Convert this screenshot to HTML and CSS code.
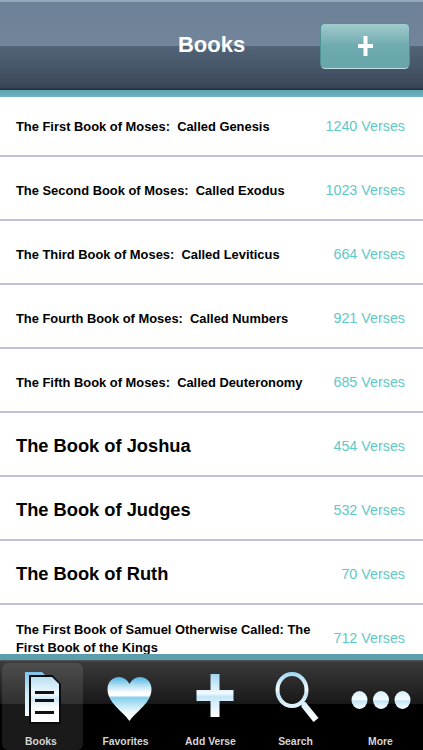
FILE: index.html
```
<!DOCTYPE html>
<html lang="en">
<head>
<meta charset="utf-8">
<title>Books</title>
<link rel="stylesheet" href="styles.css">
</head>
<body>
<div class="app">
  <header class="nav">
    <div class="nav-bar">
      <h1 class="nav-title">Books</h1>
      <button class="add-btn" type="button" aria-label="Add">
        <svg class="add-icon" viewBox="0 0 15 20"><path d="M5.500 0h4v8h5.500v4H9.500v8h-4v-8H0V8h5.500z"/></svg>
      </button>
    </div>
    <div class="nav-strip"></div>
  </header>
  <main class="list">
    <div class="row first"><span class="name">The First Book of Moses:  Called Genesis</span><span class="count">1240 Verses</span></div>
    <div class="row"><span class="name">The Second Book of Moses:  Called Exodus</span><span class="count">1023 Verses</span></div>
    <div class="row"><span class="name">The Third Book of Moses:  Called Leviticus</span><span class="count">664 Verses</span></div>
    <div class="row"><span class="name">The Fourth Book of Moses:  Called Numbers</span><span class="count">921 Verses</span></div>
    <div class="row"><span class="name">The Fifth Book of Moses:  Called Deuteronomy</span><span class="count">685 Verses</span></div>
    <div class="row"><span class="name big">The Book of Joshua</span><span class="count">454 Verses</span></div>
    <div class="row"><span class="name big">The Book of Judges</span><span class="count">532 Verses</span></div>
    <div class="row"><span class="name big">The Book of Ruth</span><span class="count">70 Verses</span></div>
    <div class="row"><span class="name wrap">The First Book of Samuel Otherwise Called: The First Book of the Kings</span><span class="count">712 Verses</span></div>
  </main>
  <footer class="tabs">
    <div class="tab active">
      <svg class="tab-icon" viewBox="9 670 64 56">
        <defs>
          <linearGradient id="gBack" gradientUnits="userSpaceOnUse" x1="0" y1="672" x2="0" y2="716"><stop offset="0" stop-color="#7cc3ea"/><stop offset=".45" stop-color="#cbe8f7"/><stop offset="1" stop-color="#f4fbfe"/></linearGradient>
          <linearGradient id="gFront" gradientUnits="userSpaceOnUse" x1="0" y1="677" x2="0" y2="722"><stop offset="0" stop-color="#b9dff3"/><stop offset=".38" stop-color="#f2fafe"/><stop offset=".48" stop-color="#cfe9f7"/><stop offset=".7" stop-color="#fff"/><stop offset="1" stop-color="#fff"/></linearGradient>
        </defs>
        <path d="M25 672h17l3 3v41H25z" fill="url(#gBack)"/>
        <path d="M29 675h23.500L61 684v40H29z" fill="#0c0c0c"/>
        <path d="M31 677h21l7 7v38H31z" fill="url(#gFront)"/>
        <path d="M35 691h19v3H35zM35 699h19v3H35zM35 711h19v3H35z" fill="#111"/>
      </svg>
      <span class="tab-label">Books</span>
    </div>
    <div class="tab">
      <svg class="tab-icon" viewBox="93.500 670 64 56">
        <defs>
          <linearGradient id="gHeart" gradientUnits="userSpaceOnUse" x1="0" y1="677" x2="0" y2="721"><stop offset="0" stop-color="#4fb4e2"/><stop offset=".2" stop-color="#b8e1f3"/><stop offset=".36" stop-color="#fff"/><stop offset=".42" stop-color="#fff"/><stop offset=".47" stop-color="#83cfec"/><stop offset=".8" stop-color="#f2fafe"/><stop offset="1" stop-color="#fff"/></linearGradient>
        </defs>
        <path d="M129 721C122 711 107 703 107 689 107 682 112 677 118.500 677 123 677 127 680 129 684 131 680 135 677 139.500 677 146 677 151 682 151 689 151 703 136 711 129 721z" fill="url(#gHeart)"/>
      </svg>
      <span class="tab-label">Favorites</span>
    </div>
    <div class="tab">
      <svg class="tab-icon" viewBox="178.500 670 64 56">
        <defs>
          <linearGradient id="gPlus" gradientUnits="userSpaceOnUse" x1="0" y1="674" x2="0" y2="717"><stop offset="0" stop-color="#9fd5f0"/><stop offset=".45" stop-color="#f2fafe"/><stop offset=".52" stop-color="#c5e6f6"/><stop offset="1" stop-color="#fff"/></linearGradient>
        </defs>
        <path d="M210 674h9v16h14v11h-14v16h-9v-16h-14v-11h14z" fill="url(#gPlus)"/>
      </svg>
      <span class="tab-label">Add Verse</span>
    </div>
    <div class="tab">
      <svg class="tab-icon" viewBox="263.500 670 64 56">
        <defs>
          <linearGradient id="gSearch" gradientUnits="userSpaceOnUse" x1="0" y1="672" x2="0" y2="720"><stop offset="0" stop-color="#9fd5f0"/><stop offset=".38" stop-color="#f4fbfe"/><stop offset=".45" stop-color="#c5e6f6"/><stop offset="1" stop-color="#fff"/></linearGradient>
        </defs>
        <ellipse cx="291.500" cy="690" rx="14.500" ry="16" fill="none" stroke="url(#gSearch)" stroke-width="4"/>
        <path d="M301 702h4l13 16-5 4-12-15z" fill="url(#gSearch)"/>
      </svg>
      <span class="tab-label">Search</span>
    </div>
    <div class="tab">
      <svg class="tab-icon" viewBox="348.500 670 64 56">
        <defs>
          <linearGradient id="gDot" x1="0" y1="0" x2="0" y2="1"><stop offset="0" stop-color="#d8eef9"/><stop offset=".48" stop-color="#f4fbfe"/><stop offset=".55" stop-color="#bfe4f6"/><stop offset="1" stop-color="#fff"/></linearGradient>
        </defs>
        <ellipse cx="359" cy="700" rx="8" ry="9" fill="url(#gDot)"/>
        <ellipse cx="380.500" cy="700" rx="8" ry="9" fill="url(#gDot)"/>
        <ellipse cx="402" cy="700" rx="8" ry="9" fill="url(#gDot)"/>
      </svg>
      <span class="tab-label">More</span>
    </div>
  </footer>
</div>
</body>
</html>
```
FILE: styles.css
```
* { box-sizing: border-box; }
html, body { margin: 0; padding: 0; }
body { font-family: "Liberation Sans", Arial, sans-serif; background: #fff; }
.app { width: 423px; height: 750px; display: flex; flex-direction: column; overflow: hidden; }

.nav { flex: 0 0 97px; display: flex; flex-direction: column; }
.nav-bar {
  flex: 1; display: flex; align-items: center; justify-content: center; position: relative;
  border-top: 2px solid #97a8bb;
  background: linear-gradient(#6d8197 0, #72859a 44px, #526478 44px, #435264 70px, #3a4656 85px, #232d38 88px);
}
.nav-title { margin: 0; font-size: 22px; font-weight: bold; color: #fff; position: relative; top: -1px; }
.add-btn {
  position: absolute; left: 320px; top: 21px; width: 90px; height: 46px; padding: 0;
  display: flex; align-items: center; justify-content: center;
  border: 1px solid #4f9195; border-bottom-color: #c4dfe0; border-radius: 5px;
  background: linear-gradient(#a2cbcc, #6eaab0 50%, #68a6ac);
}
.add-icon { width: 15px; height: 20px; fill: #fff; }
.nav-strip { flex: 0 0 7px; background: linear-gradient(#5ba5b3, #6cb3bf); }

.list { flex: 1; min-height: 0; overflow: hidden; background: #fff; }
.row {
  height: 64px; padding: 3px 18px 0 16px; display: flex; align-items: center; justify-content: space-between;
  border-bottom: 2px solid #c3bfd6;
}
.row.first { height: 60px; padding-top: 0; }
.name { padding-top: 2px; font-size: 12.900px; font-weight: bold; color: #000; white-space: pre-wrap; }
.first .name { padding-top: 0; }
.name.big { padding-top: 0; font-size: 18.300px; }
.name.wrap { width: 300px; line-height: 18px; padding-top: 3px; }
.count { font-size: 14.300px; color: #5ec9c5; white-space: nowrap; }

.tabs {
  flex: 0 0 96px; display: grid; grid-template-columns: 83px repeat(4, 85px); position: relative;
  border-top: 6px solid #5b9fae;
  background: linear-gradient(#55595b 0, #3a3a3a 2px, #181818 44px, #000 44px);
}
.tab { display: flex; flex-direction: column; align-items: center; padding-top: 10px; }
.tab.active { margin: 3px 0 0 2px; padding: 7px 3px 0 0; background: rgba(255,255,255,.1); border-radius: 6px; }
.tab-icon { display: block; height: 56px; width: 64px; flex: none; }
.tab-label { margin-top: 10px; font-size: 10.400px; line-height: 12px; font-weight: bold; color: #d4d4d4; }
```
